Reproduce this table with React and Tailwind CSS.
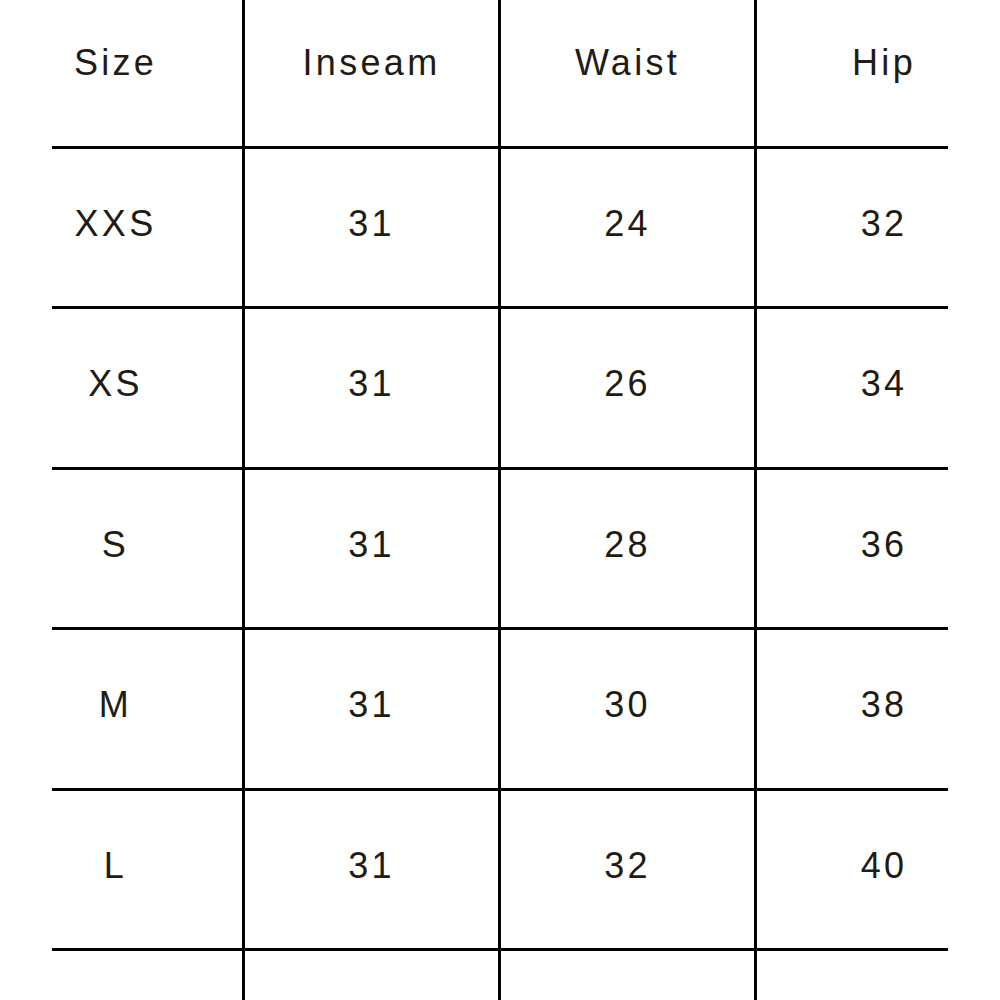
import React from "react";

const rows = [
  { size: "XXS", inseam: "31", waist: "24", hip: "32", h: "h-[160px]" },
  { size: "XS", inseam: "31", waist: "26", hip: "34", h: "h-[161px]" },
  { size: "S", inseam: "31", waist: "28", hip: "36", h: "h-[160px]" },
  { size: "M", inseam: "31", waist: "30", hip: "38", h: "h-[161px]" },
  { size: "L", inseam: "31", waist: "32", hip: "40", h: "h-[160px]" },
];

const Row = ({ cells, h, pb, last }) => {
  const edge = last ? "" : "border-b-[3px]";
  return (
    <>
      <div className={`${h} ${edge} ${pb} border-r-[3px] border-black flex items-center justify-center pr-[63px]`}>
        {cells[0]}
      </div>
      <div className={`${h} ${edge} ${pb} border-r-[3px] border-black flex items-center justify-center`}>
        {cells[1]}
      </div>
      <div className={`${h} ${edge} ${pb} border-r-[3px] border-black flex items-center justify-center`}>
        {cells[2]}
      </div>
      <div className={`${h} ${edge} ${pb} border-black flex items-center justify-center pl-[63px]`}>
        {cells[3]}
      </div>
    </>
  );
};

export default function App() {
  return (
    <div
      className="w-[1000px] h-[1000px] overflow-hidden bg-white text-[#221b14] text-[36px] tracking-[3.3px] leading-none"
      style={{ fontFamily: '"Liberation Sans", Arial, sans-serif' }}
    >
      <div className="ml-[52px] grid grid-cols-[193px_256px_256px_191px]">
        <Row cells={["Size", "Inseam", "Waist", "Hip"]} h="h-[149px]" pb="pb-[20px]" />
        {rows.map((r) => (
          <Row key={r.size} cells={[r.size, r.inseam, r.waist, r.hip]} h={r.h} pb="pb-[8px]" />
        ))}
        <Row cells={["", "", "", ""]} h="h-[80px]" pb="" last />
      </div>
    </div>
  );
}
